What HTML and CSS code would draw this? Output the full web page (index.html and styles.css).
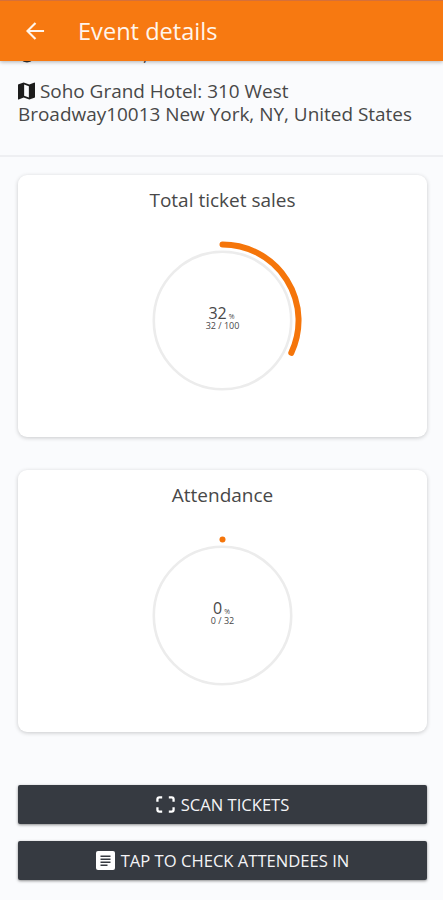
FILE: index.html
```html
<!DOCTYPE html>
<html lang="en">
<head>
  <meta charset="UTF-8">
  <meta name="viewport" content="width=device-width, initial-scale=1">
  <title>Event details</title>
  <link rel="stylesheet" href="styles.css">
</head>
<body>

  <header class="toolbar">
    <svg class="back" viewBox="0 0 20 20">
      <path d="M19 10H2M10 1.5L1.5 10L10 18.5" />
    </svg>
    <h1>Event details</h1>
  </header>

  <section class="info">
    <!-- date row, scrolled under the toolbar -->
    <div class="date-row">
      <svg class="clock" viewBox="0 0 18 18"><circle cx="9" cy="9" r="7.5" /></svg>
      <span>,</span>
    </div>
    <p class="location">
      <svg class="map" viewBox="0 0 18 18">
        <path fill-rule="evenodd" d="M17.5 0L12 2L6 0L.6 1.8Q0 2 0 2.6V17.4Q0 18.1.7 17.9L6 16L12 18L17.4 16.2Q18 16 18 15.4V.6Q18 0 17.5 0ZM6.5 2.2L11.5 3.9V15.8L6.5 14.1Z" />
      </svg>
      Soho Grand Hotel: 310 West<br>Broadway10013 New York, NY, United States
    </p>
  </section>

  <main>
    <div class="card">
      <h2>Total ticket sales</h2>
      <div class="chart">
        <svg viewBox="0 0 160 160">
          <circle class="track" cx="79.5" cy="80.5" r="68.7" />
          <path class="progress" d="M79.5 4.5A76 76 0 0 1 148.3 112.9" />
        </svg>
        <div class="value">
          <p class="percent">32 <small>%</small></p>
          <p class="count">32 / 100</p>
        </div>
      </div>
    </div>

    <div class="card">
      <h2>Attendance</h2>
      <div class="chart">
        <svg viewBox="0 0 160 160">
          <circle class="track" cx="79.5" cy="80.5" r="68.7" />
          <path class="progress" d="M79.5 4.5h.01" />
        </svg>
        <div class="value">
          <p class="percent">0 <small>%</small></p>
          <p class="count">0 / 32</p>
        </div>
      </div>
    </div>

    <button class="scan">
      <svg viewBox="0 0 20 18">
        <path class="corners" d="M1.5 6V3.5Q1.5 1.5 3.5 1.5H6.5M13.5 1.5H16.5Q18.5 1.5 18.5 3.5V6M18.5 12V14.5Q18.5 16.5 16.5 16.5H13.5M6.5 16.5H3.5Q1.5 16.5 1.5 14.5V12" />
      </svg>
      <span>SCAN TICKETS</span>
    </button>
    <button class="check">
      <svg viewBox="0 0 19 19">
        <rect width="19" height="19" rx="2" fill="#fff" />
        <path class="lines" d="M4.5 5.2H14.5M4.5 8.2H14.5M4.5 11.2H14.5M4.5 14.2H11.5" />
      </svg>
      <span>TAP TO CHECK ATTENDEES IN</span>
    </button>
  </main>

</body>
</html>
```

FILE: styles.css
```css
* {
  box-sizing: border-box;
}

body {
  margin: 0;
  height: 900px;
  overflow: hidden;
  background: #fafbfd;
  color: #484848;
  font-family: 'Open Sans', 'Noto Sans', sans-serif;
}

h1, h2, p {
  margin: 0;
  font-weight: 400;
}

.toolbar {
  position: relative;
  z-index: 1;
  display: flex;
  align-items: center;
  height: 61px;
  padding: 0 0 0 26px;
  background: #f77911;
  border-top: 1px solid #d6703a;
  box-shadow: 0 1px 4px rgba(0, 0, 0, 0.3);
  color: #fff5ec;
}

.toolbar h1 {
  margin-left: 33px;
  font-size: 23.6px;
  line-height: 30px;
}

.back {
  width: 19px;
  height: 20px;
  fill: none;
  stroke: #fff5ec;
  stroke-width: 2.3;
}

.info {
  height: 116px;
  margin-top: -20px;
  padding: 0 18px;
  border-bottom: 2px solid #eeeff2;
}

.date-row {
  display: flex;
  justify-content: space-between;
  width: 130px;
  height: 23px;
  font-size: 19px;
  line-height: 26px;
}

.clock {
  width: 18px;
  height: 18px;
  margin-top: 4px;
  fill: none;
  stroke: #333;
  stroke-width: 2;
}

.location {
  margin-top: 16px;
  font-size: 18.95px;
  line-height: 23.4px;
  white-space: nowrap;
}

.map {
  width: 17px;
  height: 18px;
  vertical-align: -2px;
  fill: #1c1c1c;
}

main {
  display: flex;
  flex-direction: column;
  padding: 18px 16px 0 18px;
}

.card {
  display: flex;
  flex-direction: column;
  align-items: center;
  height: 262px;
  margin-bottom: 33px;
  padding-top: 12px;
  background: #fff;
  border-radius: 9px;
  box-shadow: 0 1px 4px rgba(0, 0, 0, 0.2);
}

.card h2 {
  font-size: 19px;
  line-height: 26px;
}

.chart {
  display: grid;
  place-items: center;
  width: 160px;
  height: 160px;
  margin-top: 27px;
}

.chart > * {
  grid-area: 1 / 1;
}

.chart svg {
  width: 160px;
  height: 160px;
  overflow: visible;
  fill: none;
}

.track {
  stroke: #ececec;
  stroke-width: 2.6;
}

.progress {
  stroke: #f5750a;
  stroke-width: 6;
  stroke-linecap: round;
}

.value {
  margin-top: -3px;
  text-align: center;
}

.percent {
  font-size: 16px;
  line-height: 10px;
}

.percent small {
  margin: 0 2px 0 -2px;
  font-size: 7px;
}

.count {
  font-size: 9px;
  line-height: 8px;
}

button {
  display: flex;
  align-items: center;
  justify-content: center;
  gap: 6px;
  height: 39px;
  margin: 0 0 17px;
  padding: 0;
  border: none;
  border-radius: 2px;
  background: #363a41;
  box-shadow: 0 1px 3px rgba(0, 0, 0, 0.45);
  color: #f4f4f6;
  font: 16.6px 'Open Sans', 'Noto Sans', sans-serif;
}

.scan {
  margin-top: 20px;
}

button svg {
  width: 19px;
  height: 19px;
}

.corners {
  fill: none;
  stroke: #fff;
  stroke-width: 2.4;
}

.lines {
  fill: none;
  stroke: #363a41;
  stroke-width: 1.6;
}
```
